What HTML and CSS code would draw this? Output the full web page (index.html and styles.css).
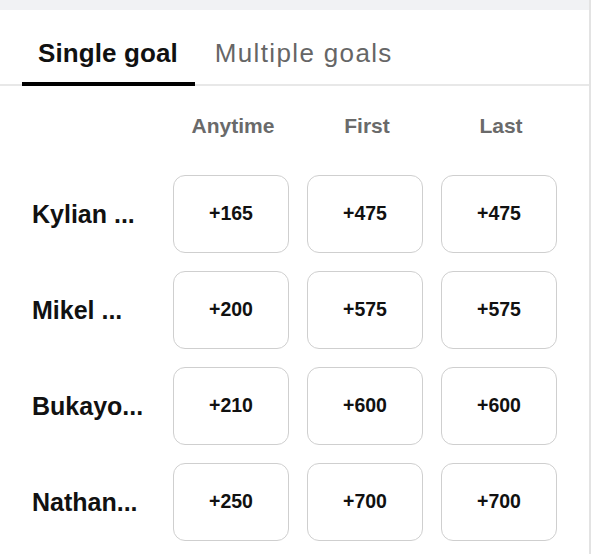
FILE: index.html
```html
<!DOCTYPE html>
<html lang="en">
<head>
<meta charset="utf-8">
<title>Goalscorer odds</title>
<link rel="stylesheet" href="styles.css">
</head>
<body>
<div class="panel">
  <div class="strip"></div>
  <div class="tabs">
    <div class="tab active">Single goal</div>
    <div class="tab">Multiple goals</div>
  </div>
  <div class="grid">
    <div class="head-blank"></div>
    <div class="head">Anytime</div>
    <div class="head">First</div>
    <div class="head">Last</div>

    <div class="name">Kylian ...</div>
    <div class="odd">+165</div>
    <div class="odd">+475</div>
    <div class="odd">+475</div>

    <div class="name">Mikel ...</div>
    <div class="odd">+200</div>
    <div class="odd">+575</div>
    <div class="odd">+575</div>

    <div class="name">Bukayo...</div>
    <div class="odd">+210</div>
    <div class="odd">+600</div>
    <div class="odd">+600</div>

    <div class="name">Nathan...</div>
    <div class="odd">+250</div>
    <div class="odd">+700</div>
    <div class="odd">+700</div>
  </div>
</div>
</body>
</html>
```
FILE: styles.css
```css
html, body {
  margin: 0;
  padding: 0;
  background: #ffffff;
}
body {
  font-family: "Liberation Sans", Arial, sans-serif;
  color: #111111;
  width: 594px;
  height: 554px;
  overflow: hidden;
}
.panel {
  width: 589px;
  height: 554px;
  border-right: 2px solid #e3e3e3;
  background: #ffffff;
}
.strip {
  height: 10px;
  background: #f1f2f4;
}
.tabs {
  display: flex;
  padding: 27px 0 0 22px;
  border-bottom: 2px solid #e8e8e8;
}
.tab {
  font-size: 26px;
  line-height: 32px;
  padding: 0 16px 13px 20px;
  border-bottom: 4px solid transparent;
  margin-bottom: -2px;
  color: #666666;
  letter-spacing: 1.35px;
  white-space: nowrap;
}
.tab.active {
  color: #111111;
  font-weight: bold;
  letter-spacing: 0.1px;
  border-bottom-color: #000000;
  padding-left: 16px;
  padding-right: 17px;
}
.grid {
  display: grid;
  grid-template-columns: 124px repeat(3, 116px);
  column-gap: 18px;
  row-gap: 18px;
  padding: 28px 0 0 31px;
  align-items: center;
}
.head {
  font-size: 21px;
  line-height: 24px;
  font-weight: bold;
  color: #6a6a6a;
  text-align: center;
  margin-bottom: 19px;
  padding-left: 4px;
}
.head-blank {
  margin-bottom: 19px;
}
.name {
  font-size: 25px;
  font-weight: bold;
  color: #111111;
  white-space: nowrap;
  padding-left: 1px;
}
.odd {
  height: 78px;
  box-sizing: border-box;
  border: 1px solid #cfcfcf;
  border-radius: 12px;
  display: flex;
  align-items: center;
  justify-content: center;
  font-size: 19.5px;
  font-weight: bold;
  color: #111111;
  padding-bottom: 2px;
}
```
